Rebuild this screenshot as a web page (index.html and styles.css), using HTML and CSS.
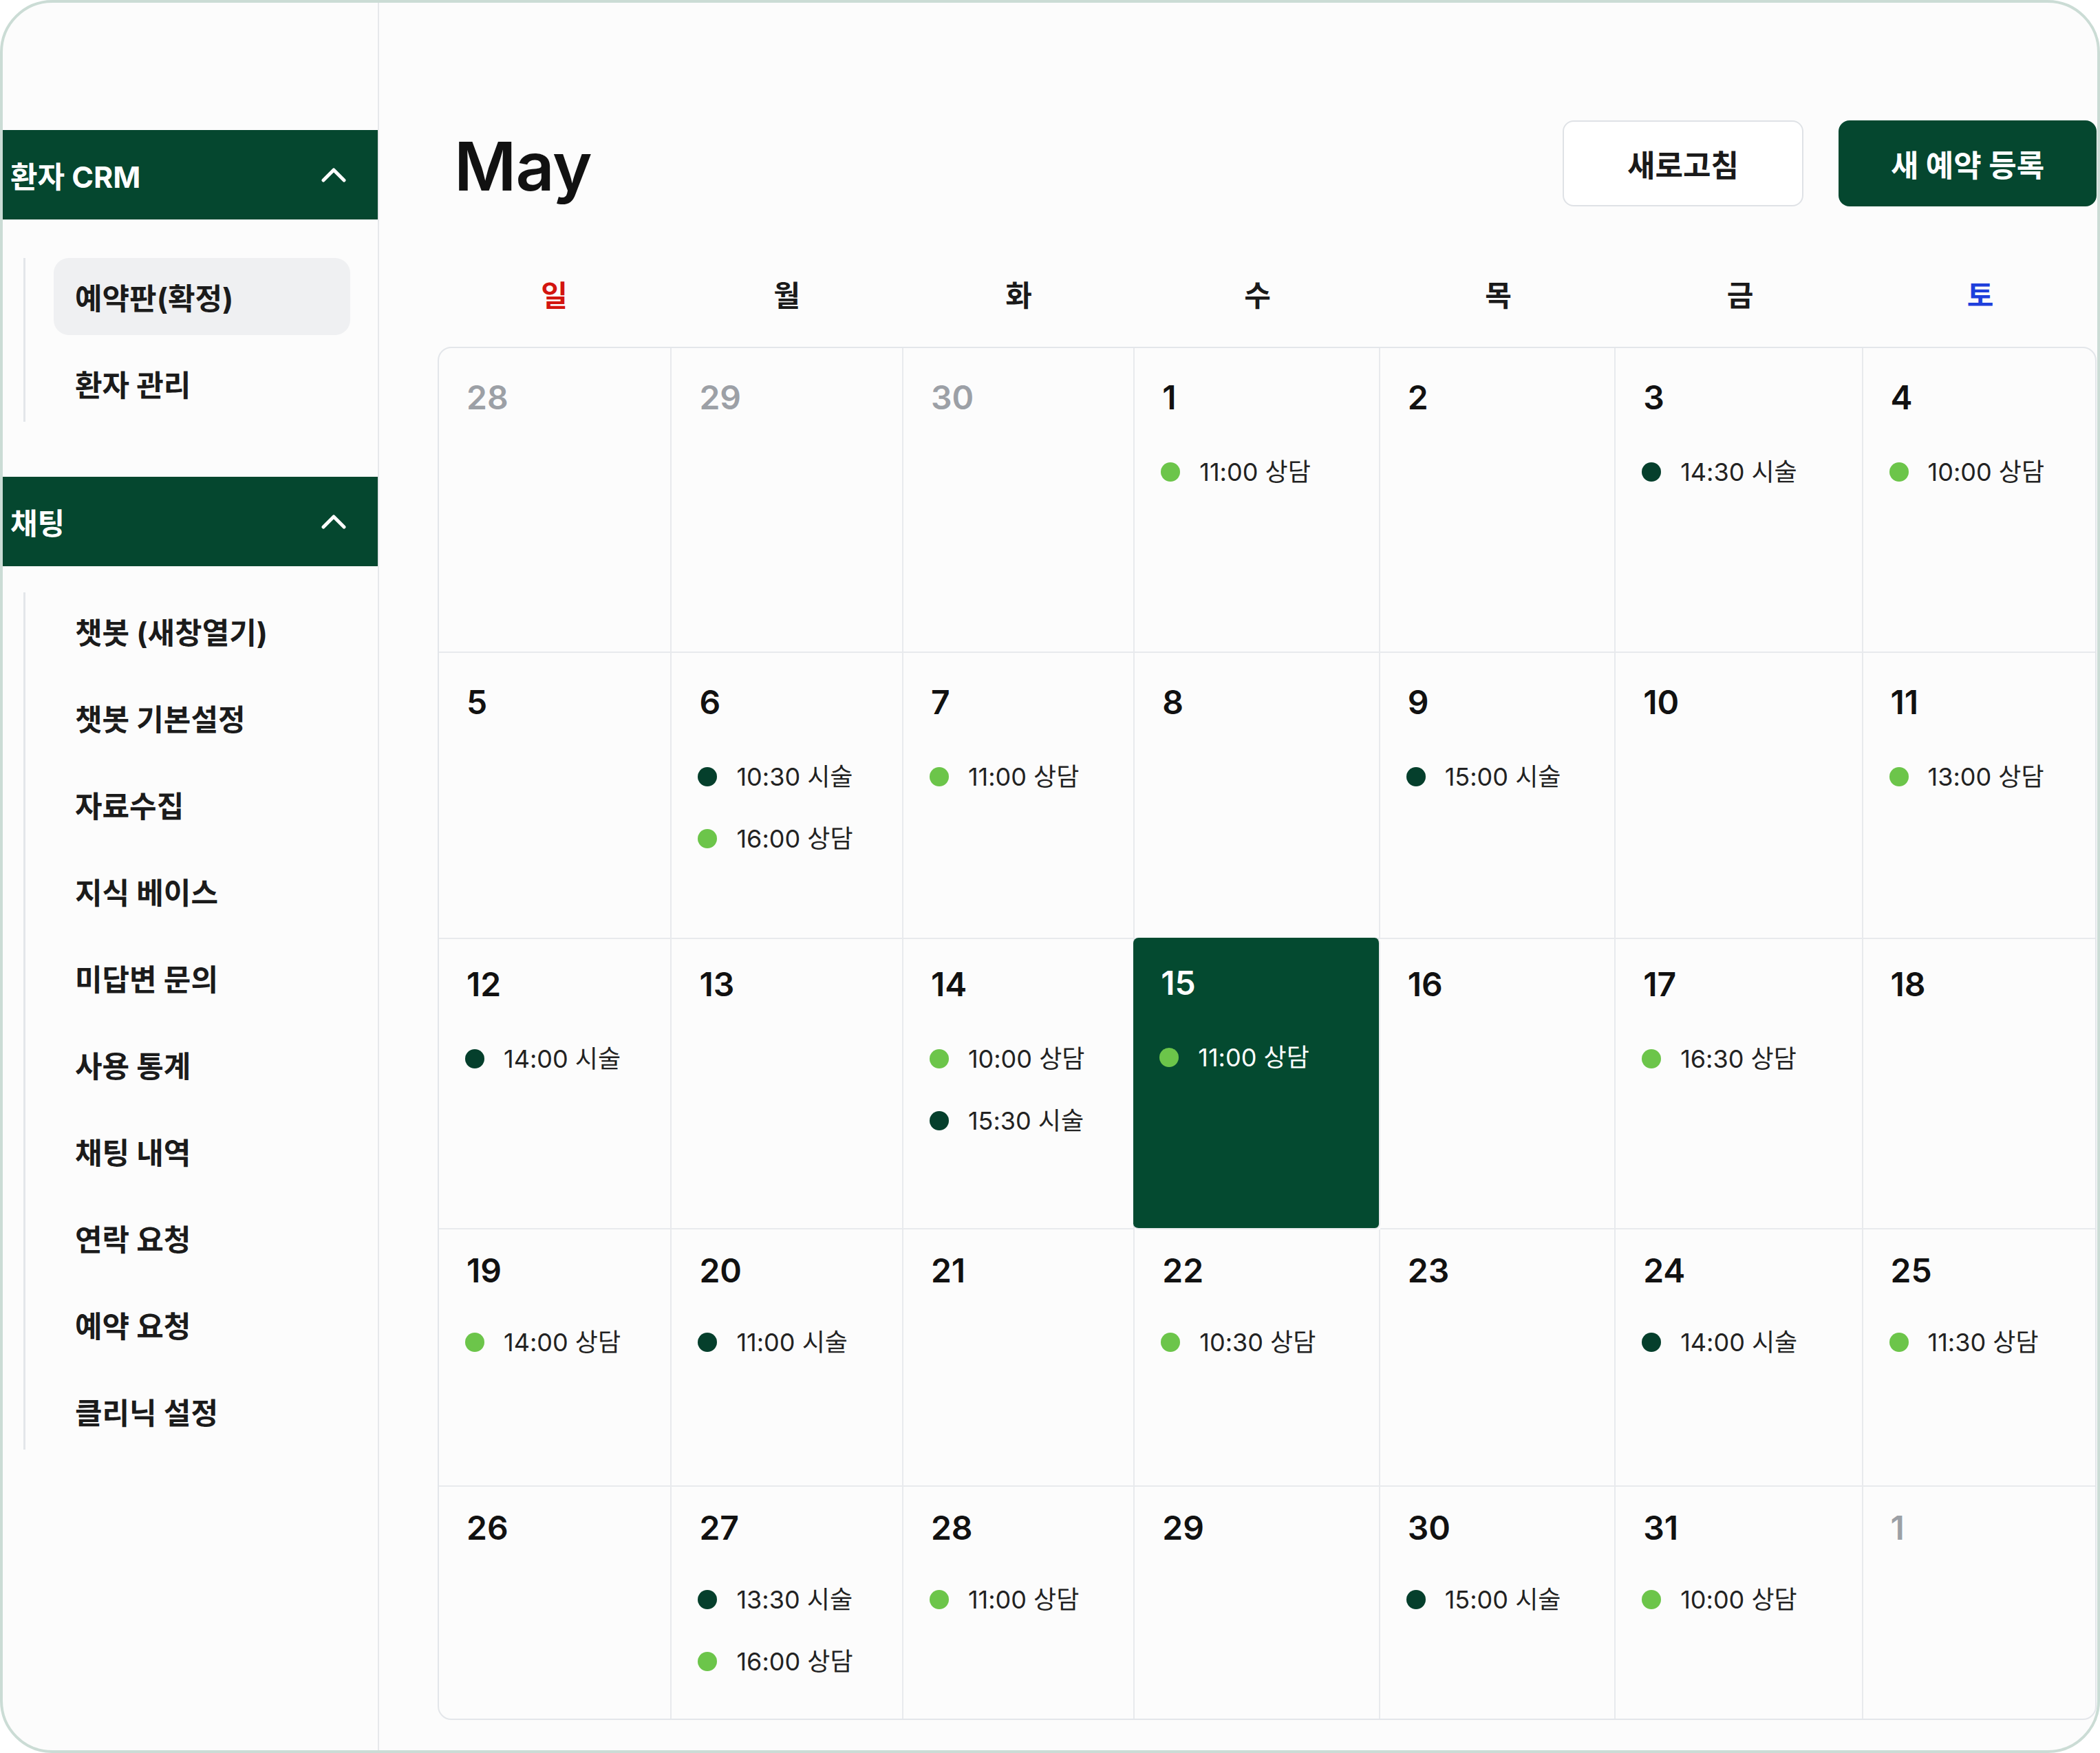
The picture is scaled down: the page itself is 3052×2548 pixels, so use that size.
FILE: index.html
```html
<!DOCTYPE html>
<html lang="ko">
<head>
    <meta charset="UTF-8">
    <meta name="viewport" content="width=device-width, initial-scale=1.0">
    <title>예약판(확정)</title>
    <link rel="stylesheet" href="styles.css">
</head>
<body>
<div class="window">

    <!-- Sidebar -->
    <aside class="sidebar">
        <div class="nav-section">
            <div class="nav-head">
                <span>환자 CRM</span>
                <svg class="chevron" viewBox="0 0 36 22"><polyline points="3,19 18,4 33,19"/></svg>
            </div>
            <ul class="nav-group">
                <li class="nav-item active">예약판(확정)</li>
                <li class="nav-item">환자 관리</li>
            </ul>
        </div>

        <div class="nav-section">
            <div class="nav-head">
                <span>채팅</span>
                <svg class="chevron" viewBox="0 0 36 22"><polyline points="3,19 18,4 33,19"/></svg>
            </div>
            <ul class="nav-group">
                <li class="nav-item">챗봇 (새창열기)</li>
                <li class="nav-item">챗봇 기본설정</li>
                <li class="nav-item">자료수집</li>
                <li class="nav-item">지식 베이스</li>
                <li class="nav-item">미답변 문의</li>
                <li class="nav-item">사용 통계</li>
                <li class="nav-item">채팅 내역</li>
                <li class="nav-item">연락 요청</li>
                <li class="nav-item">예약 요청</li>
                <li class="nav-item">클리닉 설정</li>
            </ul>
        </div>
    </aside>

    <!-- Calendar -->
    <main class="content">
        <div class="top-bar">
            <h1 class="month">May</h1>
            <div class="actions">
                <button class="btn btn-outline">새로고침</button>
                <button class="btn btn-primary">새 예약 등록</button>
            </div>
        </div>

        <div class="weekdays">
            <div class="sun">일</div>
            <div>월</div>
            <div>화</div>
            <div>수</div>
            <div>목</div>
            <div>금</div>
            <div class="sat">토</div>
        </div>

        <div class="calendar">
            <!-- week 1 -->
            <div class="day muted"><div class="num">28</div></div>
            <div class="day muted"><div class="num">29</div></div>
            <div class="day muted"><div class="num">30</div></div>
            <div class="day"><div class="num">1</div>
                <ul class="events"><li class="event"><span class="dot consult"></span>11:00 상담</li></ul>
            </div>
            <div class="day"><div class="num">2</div></div>
            <div class="day"><div class="num">3</div>
                <ul class="events"><li class="event"><span class="dot procedure"></span>14:30 시술</li></ul>
            </div>
            <div class="day"><div class="num">4</div>
                <ul class="events"><li class="event"><span class="dot consult"></span>10:00 상담</li></ul>
            </div>

            <!-- week 2 -->
            <div class="day"><div class="num">5</div></div>
            <div class="day"><div class="num">6</div>
                <ul class="events">
                    <li class="event"><span class="dot procedure"></span>10:30 시술</li>
                    <li class="event"><span class="dot consult"></span>16:00 상담</li>
                </ul>
            </div>
            <div class="day"><div class="num">7</div>
                <ul class="events"><li class="event"><span class="dot consult"></span>11:00 상담</li></ul>
            </div>
            <div class="day"><div class="num">8</div></div>
            <div class="day"><div class="num">9</div>
                <ul class="events"><li class="event"><span class="dot procedure"></span>15:00 시술</li></ul>
            </div>
            <div class="day"><div class="num">10</div></div>
            <div class="day"><div class="num">11</div>
                <ul class="events"><li class="event"><span class="dot consult"></span>13:00 상담</li></ul>
            </div>

            <!-- week 3 -->
            <div class="day"><div class="num">12</div>
                <ul class="events"><li class="event"><span class="dot procedure"></span>14:00 시술</li></ul>
            </div>
            <div class="day"><div class="num">13</div></div>
            <div class="day"><div class="num">14</div>
                <ul class="events">
                    <li class="event"><span class="dot consult"></span>10:00 상담</li>
                    <li class="event"><span class="dot procedure"></span>15:30 시술</li>
                </ul>
            </div>
            <div class="day today"><div class="num">15</div>
                <ul class="events"><li class="event"><span class="dot consult"></span>11:00 상담</li></ul>
            </div>
            <div class="day"><div class="num">16</div></div>
            <div class="day"><div class="num">17</div>
                <ul class="events"><li class="event"><span class="dot consult"></span>16:30 상담</li></ul>
            </div>
            <div class="day"><div class="num">18</div></div>

            <!-- week 4 -->
            <div class="day"><div class="num">19</div>
                <ul class="events"><li class="event"><span class="dot consult"></span>14:00 상담</li></ul>
            </div>
            <div class="day"><div class="num">20</div>
                <ul class="events"><li class="event"><span class="dot procedure"></span>11:00 시술</li></ul>
            </div>
            <div class="day"><div class="num">21</div></div>
            <div class="day"><div class="num">22</div>
                <ul class="events"><li class="event"><span class="dot consult"></span>10:30 상담</li></ul>
            </div>
            <div class="day"><div class="num">23</div></div>
            <div class="day"><div class="num">24</div>
                <ul class="events"><li class="event"><span class="dot procedure"></span>14:00 시술</li></ul>
            </div>
            <div class="day"><div class="num">25</div>
                <ul class="events"><li class="event"><span class="dot consult"></span>11:30 상담</li></ul>
            </div>

            <!-- week 5 -->
            <div class="day"><div class="num">26</div></div>
            <div class="day"><div class="num">27</div>
                <ul class="events">
                    <li class="event"><span class="dot procedure"></span>13:30 시술</li>
                    <li class="event"><span class="dot consult"></span>16:00 상담</li>
                </ul>
            </div>
            <div class="day"><div class="num">28</div>
                <ul class="events"><li class="event"><span class="dot consult"></span>11:00 상담</li></ul>
            </div>
            <div class="day"><div class="num">29</div></div>
            <div class="day"><div class="num">30</div>
                <ul class="events"><li class="event"><span class="dot procedure"></span>15:00 시술</li></ul>
            </div>
            <div class="day"><div class="num">31</div>
                <ul class="events"><li class="event"><span class="dot consult"></span>10:00 상담</li></ul>
            </div>
            <div class="day muted"><div class="num">1</div></div>
        </div>
    </main>

</div>
</body>
</html>
```

FILE: styles.css
```css
body {
    margin: 0;
    background-color: #fff;
    font-family: Inter, "Noto Sans CJK KR", sans-serif;
    color: #1a1a1a;
}

.window {
    width: 3052px;
    height: 2548px;
    box-sizing: border-box;
    border: 4px solid #cbdcd5;
    border-radius: 76px;
    background-color: #fcfcfc;
    display: flex;
    overflow: hidden;
}

/* sidebar */
.sidebar {
    width: 547px;
    flex-shrink: 0;
    box-sizing: border-box;
    border-right: 2px solid #e6e8eb;
    padding-top: 185px;
}

.nav-section + .nav-section {
    margin-top: 80px;
}

.nav-head {
    height: 130px;
    background-color: #05472f;
    color: #fff;
    display: flex;
    align-items: center;
    justify-content: space-between;
    padding: 0 46px 0 11px;
    font-size: 43px;
    font-weight: 700;
}

.chevron {
    width: 36px;
    height: 22px;
    fill: none;
    stroke: #fff;
    stroke-width: 5;
    stroke-linecap: round;
    stroke-linejoin: round;
}

.nav-group {
    list-style: none;
    margin: 56px 0 0 30px;
    padding: 0;
    border-left: 3px solid #e3e6ea;
}

.nav-section + .nav-section .nav-group {
    margin-top: 38px;
}

.nav-item {
    height: 112px;
    display: flex;
    align-items: center;
    padding-left: 31px;
    margin: 0 40px 14px 41px;
    border-radius: 22px;
    font-size: 43px;
    font-weight: 700;
    color: #1b1b1b;
}

.nav-item:last-child {
    margin-bottom: 0;
}

.nav-item.active {
    background-color: #eff0f2;
}

/* main */
.content {
    flex: 1;
    min-width: 0;
    padding: 171px 1px 0 85px;
}

.top-bar {
    display: flex;
    align-items: center;
    justify-content: space-between;
    height: 125px;
}

.month {
    margin: 8px 0 0 24px;
    font-size: 98px;
    font-weight: 600;
    line-height: 1;
    letter-spacing: -1px;
    color: #111;
}

.actions {
    display: flex;
    gap: 51px;
}

.btn {
    height: 125px;
    box-sizing: border-box;
    border-radius: 16px;
    font-family: Inter, "Noto Sans CJK KR", sans-serif;
    font-size: 44px;
    font-weight: 700;
    cursor: pointer;
}

.btn-outline {
    width: 350px;
    background-color: #fff;
    border: 2px solid #dfe2e6;
    color: #1a1a1a;
}

.btn-primary {
    width: 375px;
    background-color: #05472f;
    border: none;
    color: #fff;
}

.weekdays,
.calendar {
    display: grid;
    grid-template-columns: 339fr 337fr 337fr 357fr 343fr 360fr 338fr;
}

.weekdays {
    margin-top: 76px;
    height: 100px;
    align-items: center;
    text-align: center;
    font-size: 42px;
    font-weight: 700;
}

.weekdays .sun {
    color: #d3150f;
}

.weekdays .sat {
    color: #1f3fdc;
}

.calendar {
    grid-template-rows: 443px 416px 422px 374px 337px;
    margin-top: 28px;
    border: 2px solid #e3e6ea;
    border-radius: 20px;
}

.day {
    border-right: 2px solid #e8eaed;
    border-bottom: 2px solid #e8eaed;
    padding: 48px 20px 0 38px;
    min-width: 0;
}

.day:nth-child(7n) {
    border-right: none;
}

.day:nth-last-child(-n+7) {
    border-bottom: none;
}

.num {
    font-size: 48px;
    font-weight: 600;
    line-height: 1;
    color: #111;
    padding-left: 2px;
}

.muted .num {
    color: #9ca0a6;
}

.events {
    list-style: none;
    margin: 62px 0 0;
    padding: 0;
    display: flex;
    flex-direction: column;
    gap: 46px;
}

.day:nth-last-child(-n+21) {
    padding-top: 42px;
}

.day:nth-last-child(-n+14) {
    padding-top: 36px;
}

.day:nth-last-child(-n+14) .events {
    margin-top: 58px;
}

.event {
    display: flex;
    align-items: center;
    gap: 28px;
    font-size: 36px;
    line-height: 44px;
    color: #222;
    white-space: nowrap;
}

.dot {
    width: 28px;
    height: 28px;
    border-radius: 50%;
    flex-shrink: 0;
}

.dot.consult {
    background-color: #6cc54a;
}

.dot.procedure {
    background-color: #053f2c;
}

.day.today {
    background-color: #044a30;
    border-radius: 8px;
    margin: -2px 0 0 -2px;
}

.today .num,
.today .event {
    color: #fff;
}
```
